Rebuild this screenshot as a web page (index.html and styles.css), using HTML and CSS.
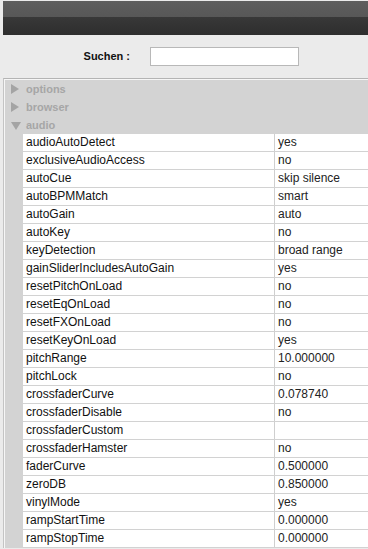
FILE: index.html
```html
<!DOCTYPE html>
<html lang="de">
<head>
  <meta charset="UTF-8">
  <title>Einstellungen</title>
  <link rel="stylesheet" href="styles.css">
</head>
<body>
  <div class="topbar"></div>

  <div class="search">
    <label for="q">Suchen :</label>
    <input id="q" type="text">
  </div>

  <div class="panel">
    <div class="group closed">options</div>
    <div class="group closed">browser</div>
    <div class="group open">audio</div>

    <div class="rows">
      <div class="row"><span class="key">audioAutoDetect</span><span class="val">yes</span></div>
      <div class="row"><span class="key">exclusiveAudioAccess</span><span class="val">no</span></div>
      <div class="row"><span class="key">autoCue</span><span class="val">skip silence</span></div>
      <div class="row"><span class="key">autoBPMMatch</span><span class="val">smart</span></div>
      <div class="row"><span class="key">autoGain</span><span class="val">auto</span></div>
      <div class="row"><span class="key">autoKey</span><span class="val">no</span></div>
      <div class="row"><span class="key">keyDetection</span><span class="val">broad range</span></div>
      <div class="row"><span class="key">gainSliderIncludesAutoGain</span><span class="val">yes</span></div>
      <div class="row"><span class="key">resetPitchOnLoad</span><span class="val">no</span></div>
      <div class="row"><span class="key">resetEqOnLoad</span><span class="val">no</span></div>
      <div class="row"><span class="key">resetFXOnLoad</span><span class="val">no</span></div>
      <div class="row"><span class="key">resetKeyOnLoad</span><span class="val">yes</span></div>
      <div class="row"><span class="key">pitchRange</span><span class="val">10.000000</span></div>
      <div class="row"><span class="key">pitchLock</span><span class="val">no</span></div>
      <div class="row"><span class="key">crossfaderCurve</span><span class="val">0.078740</span></div>
      <div class="row"><span class="key">crossfaderDisable</span><span class="val">no</span></div>
      <div class="row"><span class="key">crossfaderCustom</span><span class="val"></span></div>
      <div class="row"><span class="key">crossfaderHamster</span><span class="val">no</span></div>
      <div class="row"><span class="key">faderCurve</span><span class="val">0.500000</span></div>
      <div class="row"><span class="key">zeroDB</span><span class="val">0.850000</span></div>
      <div class="row"><span class="key">vinylMode</span><span class="val">yes</span></div>
      <div class="row"><span class="key">rampStartTime</span><span class="val">0.000000</span></div>
      <div class="row"><span class="key">rampStopTime</span><span class="val">0.000000</span></div>
    </div>
  </div>
</body>
</html>
```

FILE: styles.css
```css
body {
  margin: 0;
  padding: 0;
  background: #ebebeb;
  font-family: "Liberation Sans", Arial, sans-serif;
  font-size: 12px;
  color: #111;
  overflow: hidden;
}

.topbar {
  margin: 1px 0 0 3px;
  height: 34px;
  background: linear-gradient(#5e5e5e 0, #575757 16px, #383838 16px, #2e2e2e 100%);
}

.search {
  height: 43px;
  display: flex;
  align-items: center;
}

.search label {
  width: 130px;
  text-align: right;
  font-weight: bold;
  font-size: 11px;
  color: #111;
  margin-top: -2px;
}

.search input {
  margin-left: 20px;
  width: 147px;
  height: 17px;
  padding: 0;
  border: 1px solid #b8b8b8;
  background: #fff;
  margin-top: -1px;
}

.panel {
  margin-left: 3px;
  border-top: 1px solid #b4b4b4;
  border-left: 1px solid #c4c4c4;
  background: #d3d3d3;
  box-shadow: inset 1px 1px 0 #f6f6f6;
}

.group {
  height: 18px;
  line-height: 18px;
  padding-left: 22px;
  font-weight: bold;
  font-size: 11px;
  color: #a6a6a6;
  position: relative;
}

.group:first-child {
  margin-top: 1px;
}

.group::before {
  content: "";
  position: absolute;
  left: 7px;
  top: 4px;
  width: 0;
  height: 0;
}

.group.closed::before {
  border-top: 5px solid transparent;
  border-bottom: 5px solid transparent;
  border-left: 8px solid #a4a4a4;
}

.group.open::before {
  top: 6px;
  border-left: 5px solid transparent;
  border-right: 5px solid transparent;
  border-top: 8px solid #a4a4a4;
}

.rows {
  padding-left: 19px;
}

.row {
  display: grid;
  grid-template-columns: 252px 1fr;
  height: 18px;
  line-height: 17px;
  background: #fff;
  border-bottom: 1px solid #d2d2d2;
  box-sizing: border-box;
}

.key {
  padding-left: 3px;
  border-right: 1px solid #cfcfcf;
}

.val {
  padding-left: 3px;
  color: #222;
}
```
